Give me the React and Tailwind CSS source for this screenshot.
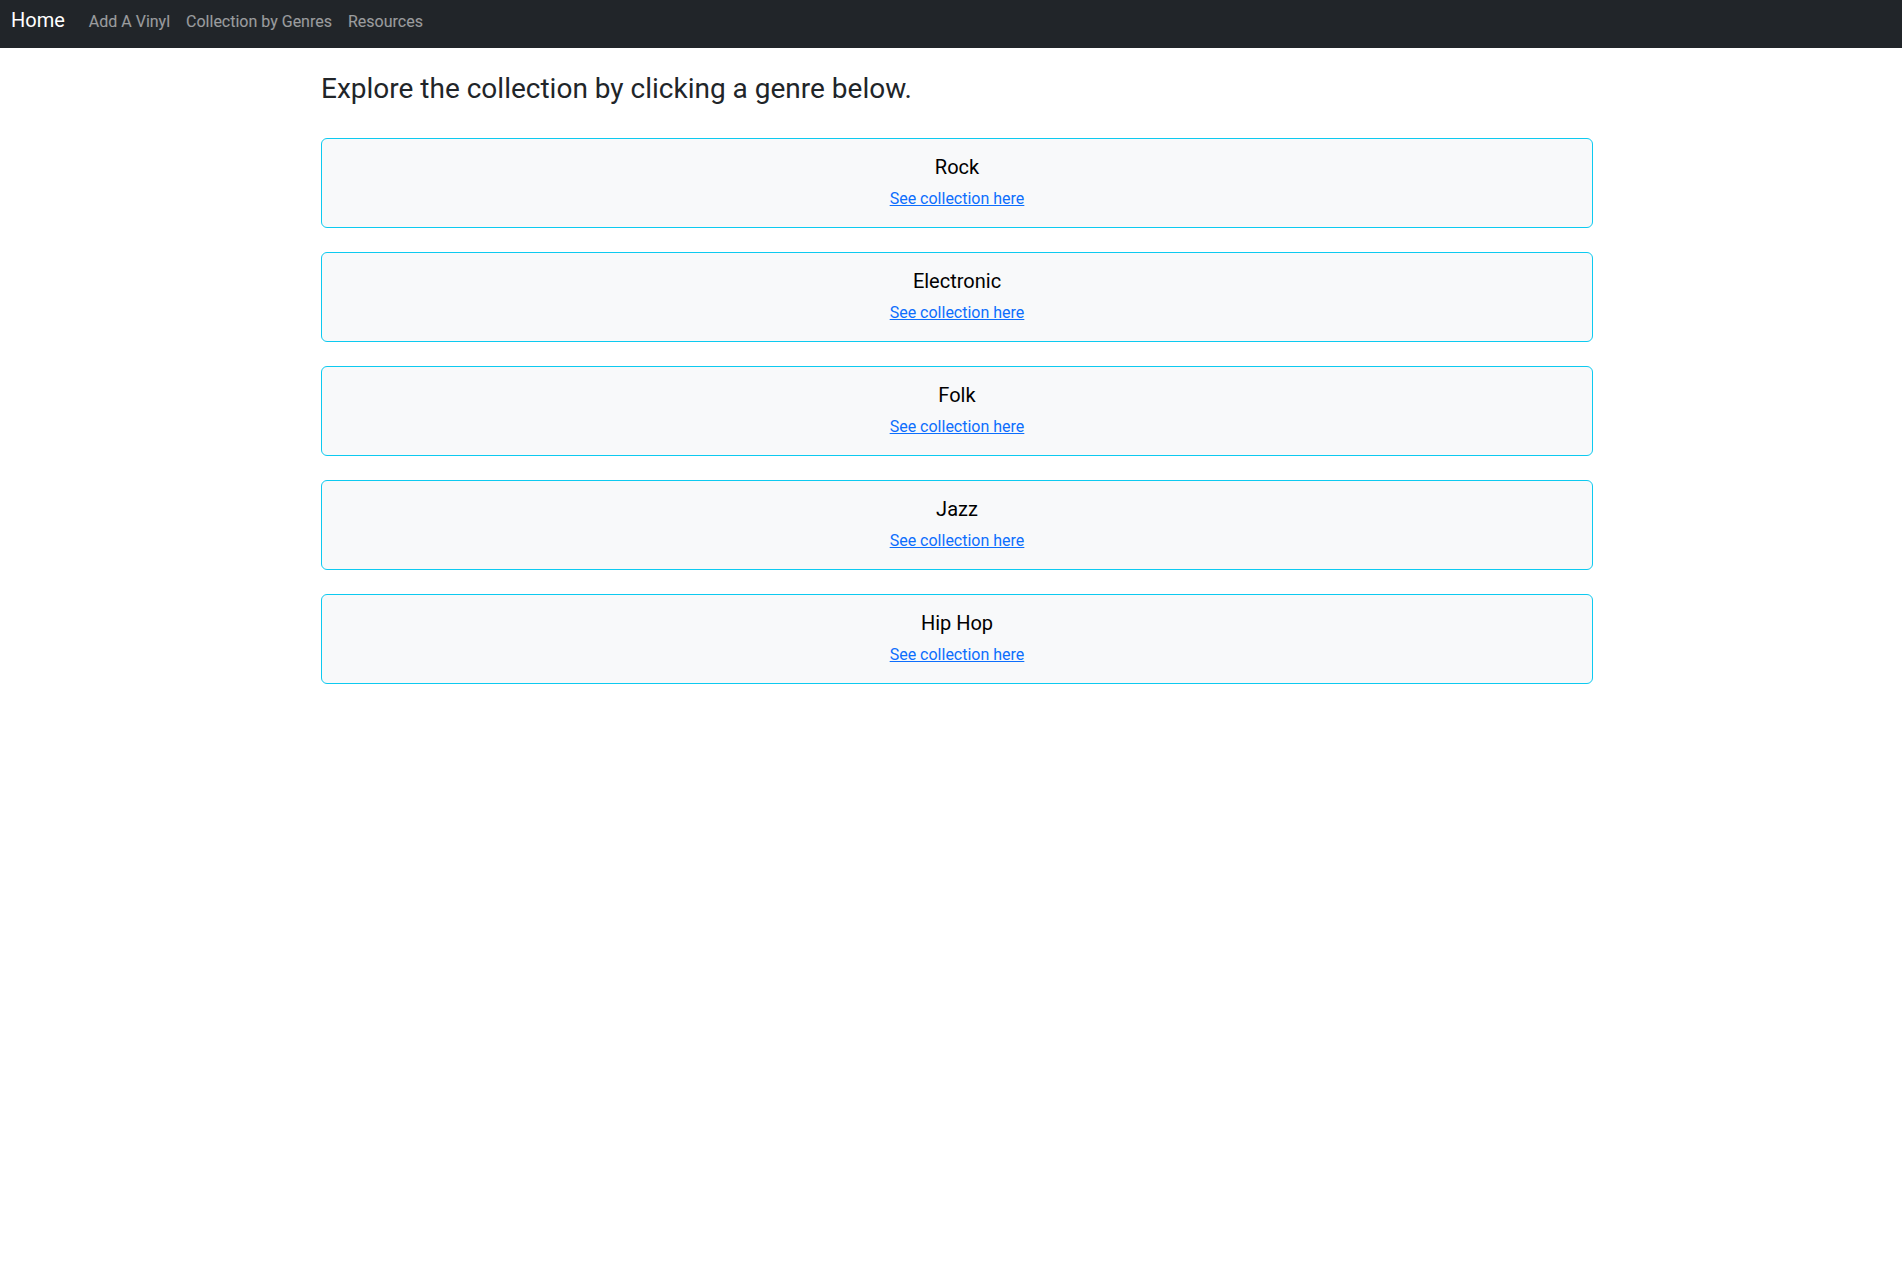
import React from 'react';

const genres = ['Rock', 'Electronic', 'Folk', 'Jazz', 'Hip Hop'];

function Navbar() {
  return (
    <nav className="h-12 bg-[#212529] flex items-baseline pt-2 px-[11px]">
      <a href="#" className="text-[20px] leading-6 text-white mr-4">Home</a>
      <div className="flex items-baseline">
        {['Add A Vinyl', 'Collection by Genres', 'Resources'].map((item) => (
          <a key={item} href="#" className="px-2 text-base leading-6 text-white/55">
            {item}
          </a>
        ))}
      </div>
    </nav>
  );
}

function GenreCard({ name }) {
  return (
    <div className="border border-[#0dcaf0] bg-[#f8f9fa] rounded-md py-4 px-4 text-center">
      <h5 className="text-[20px] leading-6 text-black mb-2 font-normal">{name}</h5>
      <a href="#" className="text-base leading-6 text-[#0d6efd] underline">See collection here</a>
    </div>
  );
}

export default function App() {
  return (
    <div className="min-h-screen bg-white text-[#212529]" style={{ fontFamily: 'Roboto, "Noto Sans", sans-serif' }}>
      <Navbar />
      <main className="ml-[321px] w-[1272px] pt-6">
        <h3 className="text-[28px] leading-[1.2] font-normal mb-2">Explore the collection by clicking a genre below.</h3>
        <div className="mt-8 flex flex-col gap-6">
          {genres.map((g) => (
            <GenreCard key={g} name={g} />
          ))}
        </div>
      </main>
    </div>
  );
}
